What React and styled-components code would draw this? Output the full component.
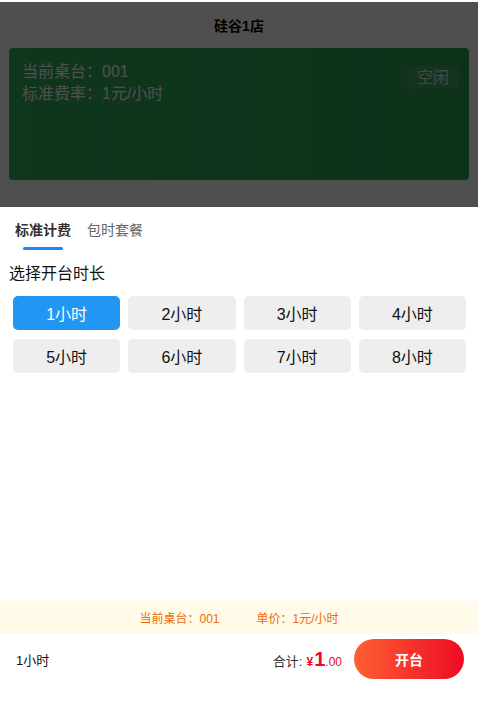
import React, { useState } from "react";
import styled, { createGlobalStyle } from "styled-components";

const GlobalStyle = createGlobalStyle`
  * { box-sizing: border-box; }
  html, body {
    margin: 0;
    padding: 0;
    background: #fff;
    font-family: "Liberation Sans", "Noto Sans CJK SC", sans-serif;
  }
`;

const HOURS = [1, 2, 3, 4, 5, 6, 7, 8];

const App = () => {
  const [tab, setTab] = useState(0);
  const [hours, setHours] = useState(1);
  const price = (hours * 1).toFixed(2).split(".");

  return (
    <>
      <GlobalStyle />
      <Page>
        <Header>硅谷1店</Header>
        <TableCard>
          <CardInfo>
            <div>当前桌台：001</div>
            <div>标准费率：1元/小时</div>
          </CardInfo>
          <Badge>空闲</Badge>
        </TableCard>
      </Page>

      <Overlay />

      <Sheet>
        <Tabs>
          {["标准计费", "包时套餐"].map((t, i) => (
            <Tab key={t} $active={tab === i} onClick={() => setTab(i)}>
              {t}
            </Tab>
          ))}
        </Tabs>

        <Body>
          <Label>选择开台时长</Label>
          <HourGrid>
            {HOURS.map((h) => (
              <HourButton key={h} $active={hours === h} onClick={() => setHours(h)}>
                {h}小时
              </HourButton>
            ))}
          </HourGrid>
        </Body>

        <Notice>
          <span>当前桌台：001</span>
          <span>单价：1元/小时</span>
        </Notice>

        <SubmitBar>
          <Duration>{hours}小时</Duration>
          <Total>
            合计:
            <Price>
              <small>¥</small>
              <b>{price[0]}</b>
              <small>.{price[1]}</small>
            </Price>
          </Total>
          <OpenButton>开台</OpenButton>
        </SubmitBar>
      </Sheet>
    </>
  );
};

export default App;

const Page = styled.div`
  min-height: 703px;
  background: #fff;
`;

const Header = styled.div`
  height: 48px;
  padding-top: 2px;
  display: flex;
  align-items: center;
  justify-content: center;
  font-size: 14px;
  font-weight: bold;
  color: #000;
`;

const TableCard = styled.div`
  margin: 0 9px;
  height: 132px;
  border-radius: 4px;
  padding: 13px 10px 0 13px;
  display: flex;
  justify-content: space-between;
  align-items: flex-start;
  background: linear-gradient(90deg, #36ad5f, #2e9e55);
  color: #fff;
`;

const CardInfo = styled.div`
  font-size: 16px;
  line-height: 22px;
`;

const Badge = styled.div`
  margin-top: 5px;
  height: 23px;
  line-height: 23px;
  padding: 0 10px;
  font-size: 16px;
  border-radius: 4px;
  background: rgba(255, 255, 255, 0.1);
  color: rgba(255, 255, 255, 0.8);
`;

const Overlay = styled.div`
  position: fixed;
  top: 2px;
  left: 0;
  right: 0;
  bottom: 0;
  background: rgba(0, 0, 0, 0.69);
`;

const Sheet = styled.div`
  position: fixed;
  left: 0;
  right: 0;
  bottom: 0;
  height: 496px;
  background: #fff;
  display: flex;
  flex-direction: column;
  padding-bottom: 19px;
`;

const Tabs = styled.div`
  display: flex;
  height: 44px;
  padding-left: 7px;
`;

const Tab = styled.div`
  position: relative;
  padding: 0 8px;
  display: flex;
  align-items: center;
  font-size: 14px;
  color: ${(p) => (p.$active ? "#323233" : "#646566")};
  font-weight: ${(p) => (p.$active ? "bold" : "normal")};
  cursor: pointer;

  &::after {
    content: "";
    display: ${(p) => (p.$active ? "block" : "none")};
    position: absolute;
    left: 50%;
    bottom: 1px;
    width: 40px;
    height: 3px;
    margin-left: -20px;
    border-radius: 3px;
    background: #1989fa;
  }
`;

const Body = styled.div`
  flex: 1;
  padding: 12px 12px 0 9px;
`;

const Label = styled.div`
  font-size: 16px;
  line-height: 22px;
  color: #111;
`;

const HourGrid = styled.div`
  margin-top: 11px;
  padding-left: 4px;
  display: grid;
  grid-template-columns: repeat(4, 1fr);
  gap: 9px 8px;
`;

const HourButton = styled.div`
  height: 34px;
  border-radius: 5px;
  display: flex;
  align-items: center;
  justify-content: center;
  font-size: 16px;
  cursor: pointer;
  background: ${(p) => (p.$active ? "#2196f3" : "#eeeeee")};
  color: ${(p) => (p.$active ? "#fff" : "#111")};
`;

const Notice = styled.div`
  height: 33px;
  display: flex;
  align-items: center;
  justify-content: center;
  gap: 37px;
  background: #fffbe8;
  color: #ed6a0c;
  font-size: 12px;
`;

const SubmitBar = styled.div`
  height: 50px;
  display: flex;
  align-items: center;
  padding: 0 14px 0 16px;
  font-size: 13px;
  color: #323233;
`;

const Duration = styled.div`
  flex: 1;
  font-size: 13px;
  color: #111;
`;

const Total = styled.div`
  display: flex;
  align-items: baseline;
  gap: 4px;
  font-size: 13px;
  color: #323233;
  margin-right: 12px;
`;

const Price = styled.span`
  color: #ee0a24;
  small {
    font-size: 12px;
    font-weight: normal;
  }
  small:first-child {
    font-weight: bold;
    margin-right: 1px;
  }
  b {
    font-size: 20px;
  }
`;

const OpenButton = styled.button`
  width: 110px;
  height: 40px;
  border: none;
  border-radius: 20px;
  background: linear-gradient(90deg, #ff6034, #ee0a24);
  color: #fff;
  font-family: inherit;
  font-size: 14px;
  font-weight: bold;
  cursor: pointer;
`;
